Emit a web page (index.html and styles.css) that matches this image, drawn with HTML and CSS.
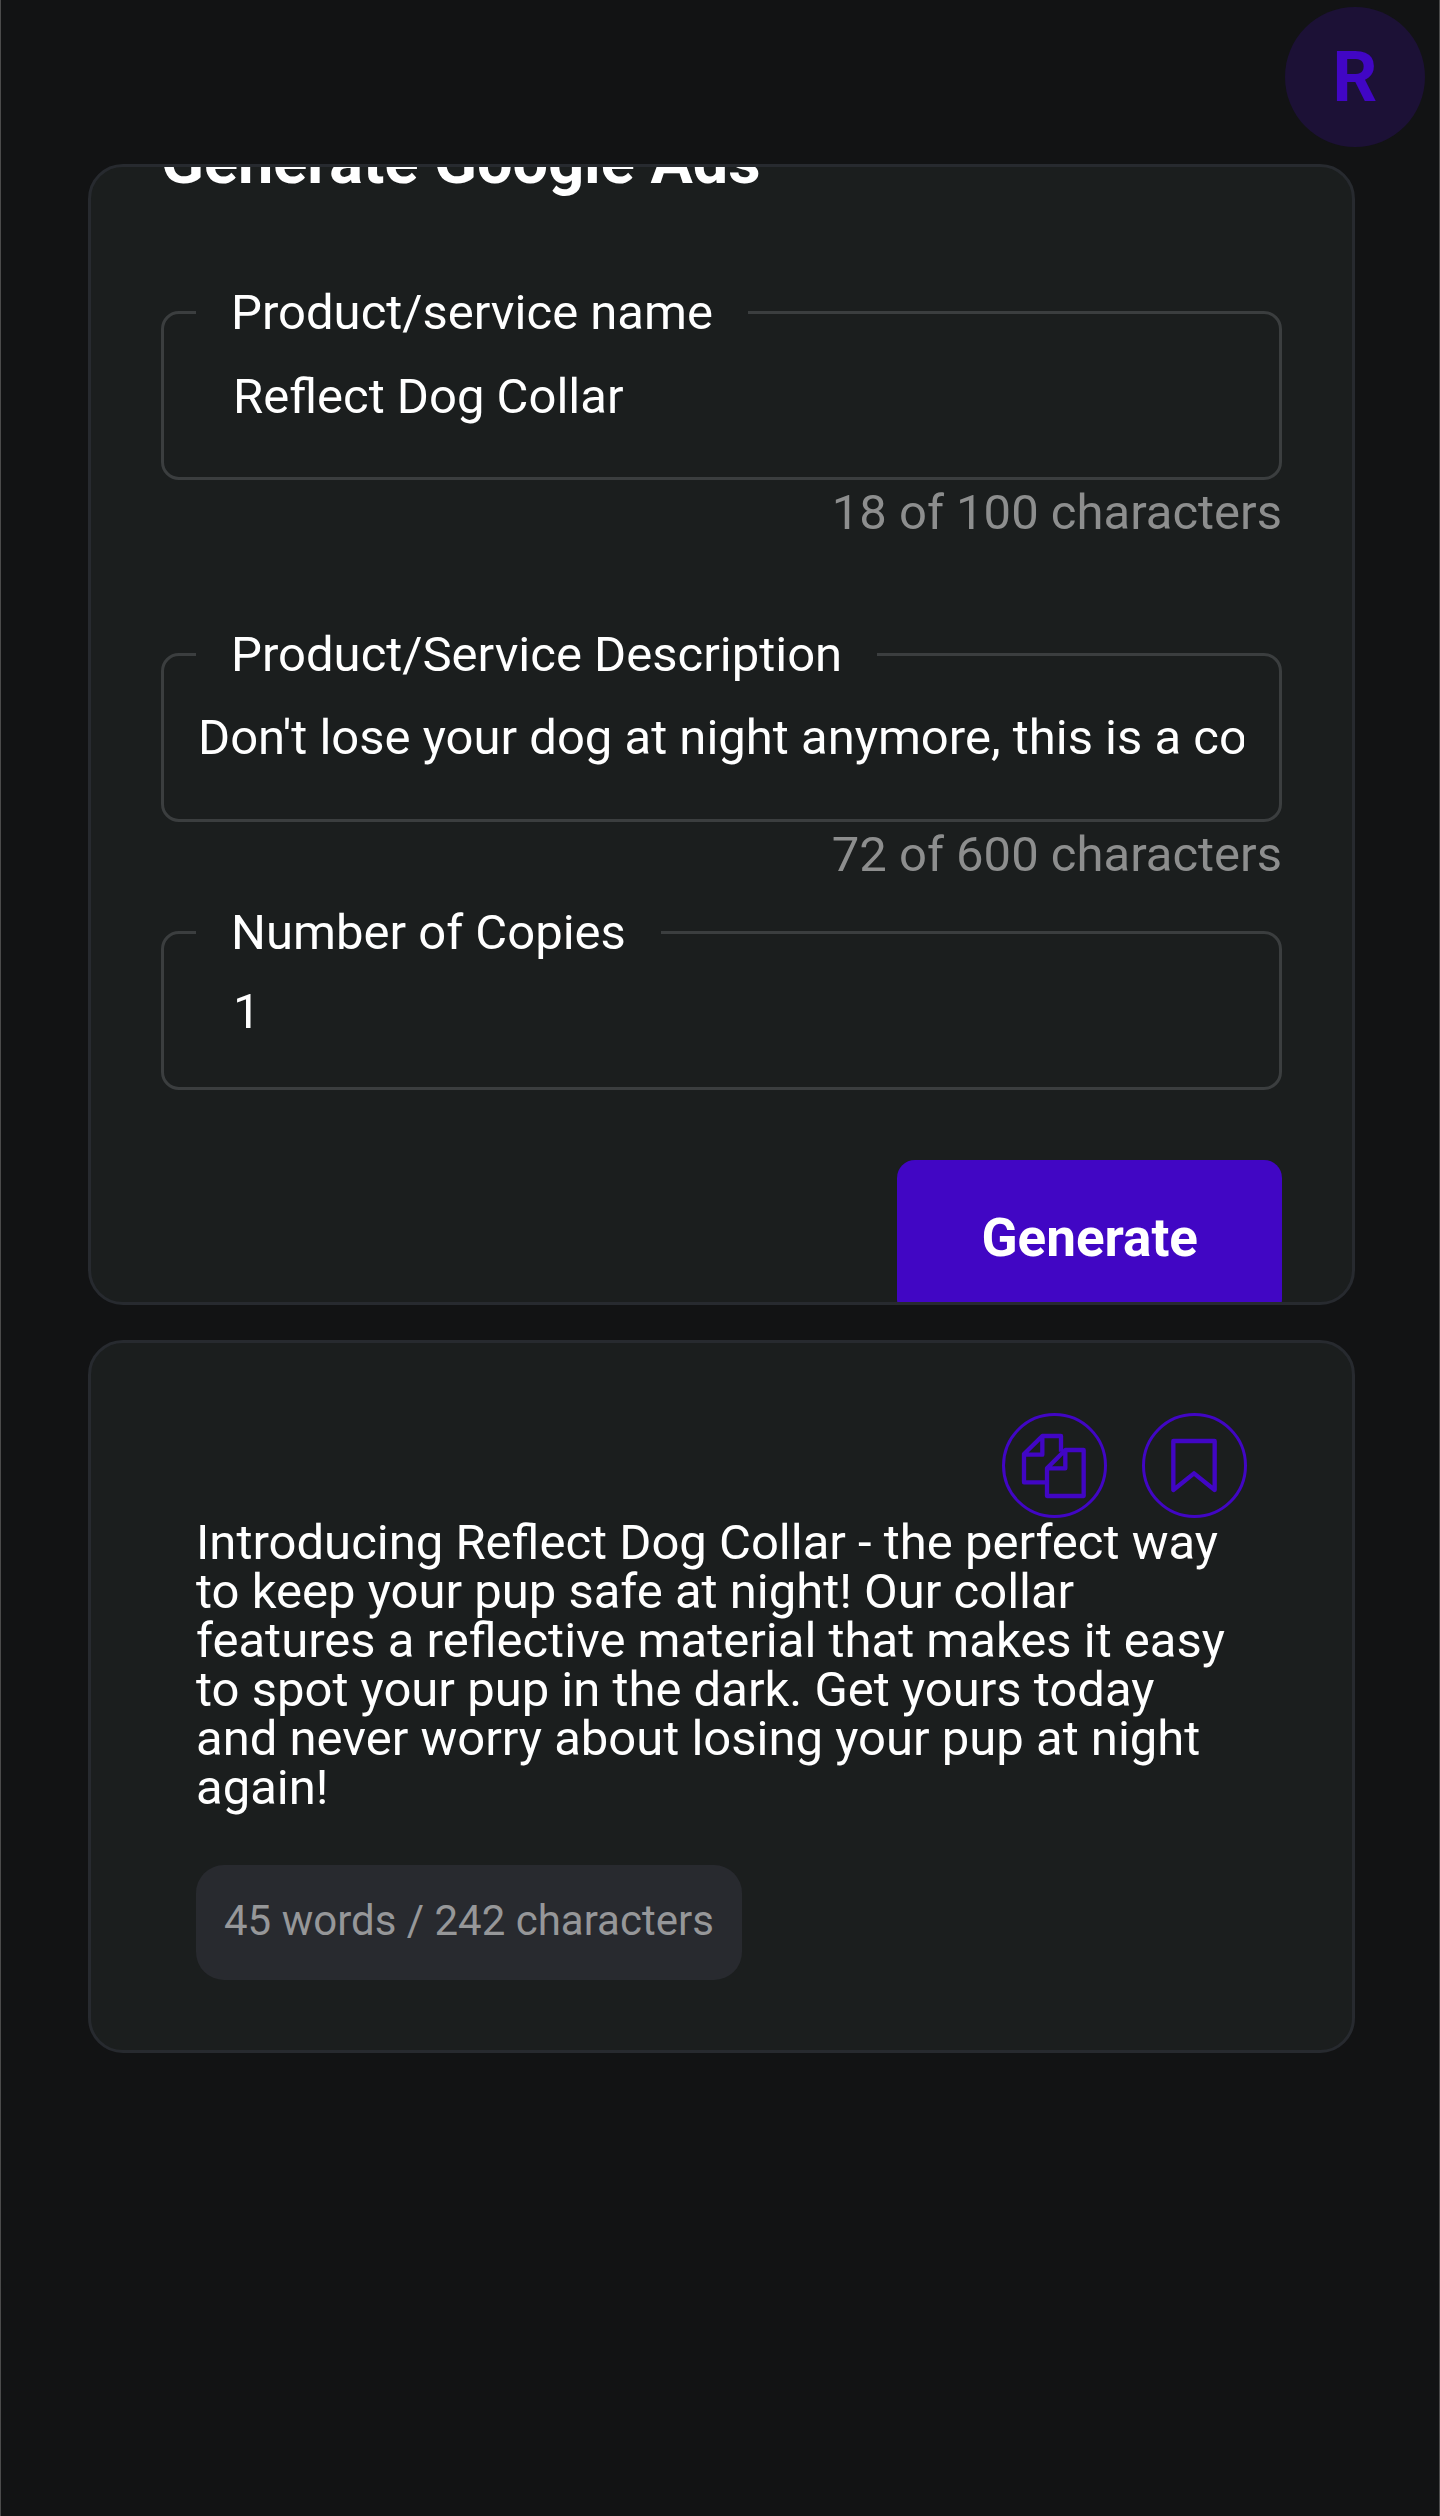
FILE: index.html
```html
<!DOCTYPE html>
<html lang="en">
<head>
<meta charset="UTF-8">
<title>Generate Google Ads</title>
<meta name="viewport" content="width=device-width,initial-scale=1">
<link rel="stylesheet" href="styles.css">
</head>
<body>
<header class="topbar">
  <button class="avatar" type="button" aria-label="Account">R</button>
</header>

<main>
  <!-- Form -->
  <form class="card form-card">
    <h1>Generate Google Ads</h1>

    <fieldset class="field">
      <legend><label for="name">Product/service name</label></legend>
      <input id="name" type="text" maxlength="100" value="Reflect Dog Collar">
    </fieldset>
    <p class="helper">18 of 100 characters</p>

    <fieldset class="field field-desc">
      <legend><label for="desc">Product/Service Description</label></legend>
      <input id="desc" type="text" maxlength="600" value="Don't lose your dog at night anymore, this is a collar that reflects light">
    </fieldset>
    <p class="helper">72 of 600 characters</p>

    <fieldset class="field field-copies">
      <legend><label for="copies">Number of Copies</label></legend>
      <input id="copies" type="text" inputmode="numeric" value="1">
    </fieldset>

    <button class="generate" type="button">Generate</button>
  </form>

  <!-- Result -->
  <section class="card result">
    <div class="actions">
      <button type="button" aria-label="Copy">
        <svg viewBox="9 9 297 297">
          <path d="M135 208H66V123L121 69H177V116M121 69V125H66"/>
          <path d="M135 166L190 111H245V249H135ZM190 111V166H135"/>
        </svg>
      </button>
      <button type="button" aria-label="Bookmark">
        <svg viewBox="9 9 297 297">
          <path d="M94 84H218V231L156 181L94 231Z"/>
        </svg>
      </button>
    </div>
    <p class="copy">Introducing Reflect Dog Collar - the perfect way to keep your pup safe at night! Our collar features a reflective material that makes it easy to spot your pup in the dark. Get yours today and never worry about losing your pup at night again!</p>
    <span class="chip">45 words / 242 characters</span>
  </section>
</main>
</body>
</html>
```
FILE: styles.css
```css
:root{
  --bg:#121314;--card:#1b1e1e;--line:#272a2f;--field:#3b3e3f;
  --fg:#fff;--muted:#8d8e8e;--accent:#4106c4;
}
*{box-sizing:border-box;margin:0}
body{font:49px/49px Roboto,sans-serif;background:var(--bg);color:var(--fg);min-height:100vh;border:solid #4b4b4b;border-width:0 1px}
button,input{font:inherit;color:inherit}
button{cursor:pointer}

/* top bar */
.topbar{display:flex;justify-content:flex-end;padding:7px 14px 17px}
.avatar{width:140px;height:140px;padding:0;border:0;border-radius:50%;background:#1c1136;color:var(--accent);font-size:70px;font-weight:700}

/* cards */
main{display:flex;flex-direction:column;gap:35px;padding:0 84px 0 87px}
.card{background:var(--card);border:3px solid var(--line);border-radius:35px}

.form-card{display:flex;flex-direction:column;height:1141px;padding:0 70px;overflow:hidden}
h1{flex:none;font-size:63px;line-height:70px;font-weight:700;margin:-40px 0 91px}
.field{flex:none;min-width:0;border:3px solid var(--field);border-radius:18px;padding:29px 35px 50px 32px}
legend{padding:0 35px}
label{display:block}
.field input{display:block;width:100%;height:61px;line-height:61px;padding:0 0 0 37px;border:0;outline:0;background:none}
.field-desc{margin-top:93px;padding:28px 35px 51px 32px}
.field-desc input{padding:0 0 0 2px}
.field-copies{margin-top:29px;padding:24px 35px 45px 32px}
.helper{margin-top:8px;text-align:right;color:var(--muted)}
.generate{flex:none;align-self:flex-end;margin-top:70px;padding:49px 84px;border:0;border-radius:18px;background:var(--accent);font-size:53px;line-height:59px;font-weight:700}

/* result */
.result{padding:70px 105px}
.actions{display:flex;justify-content:flex-end;gap:35px}
.actions button{width:105px;height:105px;padding:0;border:3px solid var(--accent);border-radius:50%;background:none}
.actions svg{display:block;width:100%;fill:none;stroke:var(--accent);stroke-width:13;stroke-linejoin:round}
.chip{display:block;width:fit-content;margin-top:53px;padding:31px 28px 35px;border-radius:28px;background:#282a2f;color:#969799;font-size:42px}
```
